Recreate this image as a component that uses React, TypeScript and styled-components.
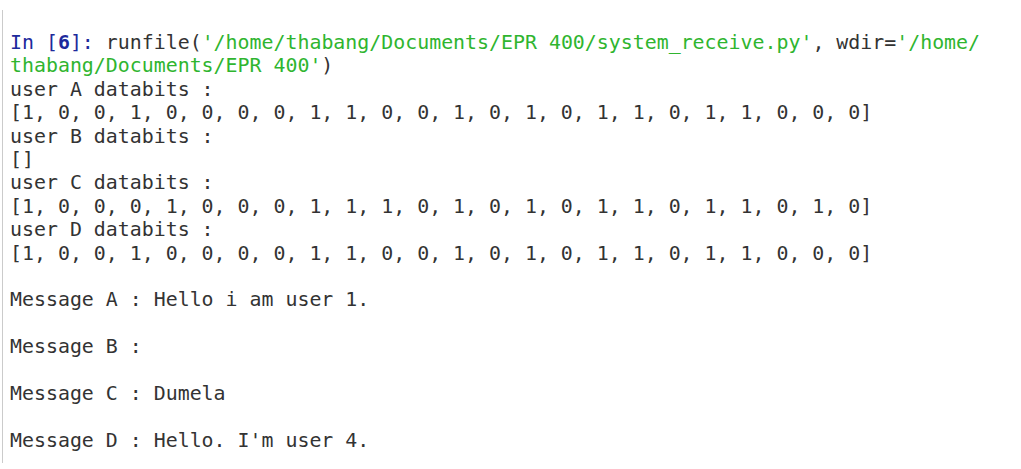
import React from "react";
import styled, { createGlobalStyle } from "styled-components";

const Global = createGlobalStyle`
  html, body { margin: 0; padding: 0; background: #ffffff; }
  body { width: 1021px; height: 469px; overflow: hidden; }
`;

const Page = styled.div`
  padding: 10px 0 6px 2px;
  height: 469px;
  box-sizing: border-box;
  display: flex;
`;

const Console = styled.div`
  flex: 1;
  border-left: 1px solid #cbcbcb;
  padding: 21px 0 0 7px;
  font-family: "DejaVu Sans Mono", monospace;
  font-size: 19.9px;
  line-height: 23.4px;
  color: #333333;
`;

const Line = styled.div`
  white-space: pre;
  min-height: 23.4px;
`;

const Prompt = styled.span`
  color: #1d2a9c;
`;

const PromptNum = styled.span`
  color: #1d2a9c;
  font-weight: bold;
`;

const Str = styled.span`
  color: #2fb52f;
`;

const outputs: string[] = [
  "user A databits :",
  "[1, 0, 0, 1, 0, 0, 0, 0, 1, 1, 0, 0, 1, 0, 1, 0, 1, 1, 0, 1, 1, 0, 0, 0]",
  "user B databits :",
  "[]",
  "user C databits :",
  "[1, 0, 0, 0, 1, 0, 0, 0, 1, 1, 1, 0, 1, 0, 1, 0, 1, 1, 0, 1, 1, 0, 1, 0]",
  "user D databits :",
  "[1, 0, 0, 1, 0, 0, 0, 0, 1, 1, 0, 0, 1, 0, 1, 0, 1, 1, 0, 1, 1, 0, 0, 0]",
  "",
  "Message A : Hello i am user 1.",
  "",
  "Message B :",
  "",
  "Message C : Dumela",
  "",
  "Message D : Hello. I'm user 4.",
];

export default function App() {
  return (
    <>
      <Global />
      <Page>
        <Console>
          <Line>
            <Prompt>In [</Prompt>
            <PromptNum>6</PromptNum>
            <Prompt>]: </Prompt>
            runfile(<Str>'/home/thabang/Documents/EPR 400/system_receive.py'</Str>, wdir=<Str>'/home/</Str>
          </Line>
          <Line>
            <Str>thabang/Documents/EPR 400'</Str>)
          </Line>
          {outputs.map((t, i) => (
            <Line key={i}>{t}</Line>
          ))}
        </Console>
      </Page>
    </>
  );
}
